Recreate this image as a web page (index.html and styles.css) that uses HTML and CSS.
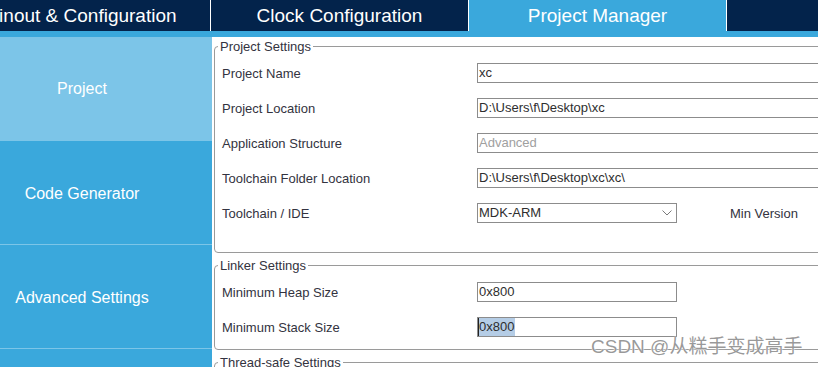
FILE: index.html
```html
<!DOCTYPE html>
<html lang="en">
<head>
<meta charset="utf-8">
<title>Project Manager</title>
<link rel="stylesheet" href="styles.css">
</head>
<body>
<div class="app">
  <nav class="tabs">
    <div class="tab">Pinout &amp; Configuration</div>
    <div class="tab">Clock Configuration</div>
    <div class="tab active">Project Manager</div>
    <div class="tab tab-rest"></div>
  </nav>
  <div class="strip"></div>
  <div class="main">
    <aside class="side">
      <div class="item active">Project</div>
      <div class="item">Code Generator</div>
      <div class="item">Advanced Settings</div>
      <div class="item"></div>
    </aside>
    <section class="content">
      <fieldset class="group group-project">
        <legend>Project Settings</legend>
        <div class="row"><span class="label">Project Name</span><div class="field">xc</div></div>
        <div class="row"><span class="label">Project Location</span><div class="field">D:\Users\f\Desktop\xc</div></div>
        <div class="row"><span class="label">Application Structure</span><div class="field disabled">Advanced</div></div>
        <div class="row"><span class="label">Toolchain Folder Location</span><div class="field">D:\Users\f\Desktop\xc\xc\</div></div>
        <div class="row"><span class="label">Toolchain / IDE</span>
          <div class="field select"><span>MDK-ARM</span>
            <svg class="chev" width="10" height="6" viewBox="0 0 10 6"><polyline points="0.5,0.5 5,5 9.5,0.5" fill="none" stroke="#7a7a7a" stroke-width="1"/></svg>
          </div>
          <span class="minver">Min Version</span>
        </div>
      </fieldset>
      <fieldset class="group group-linker">
        <legend>Linker Settings</legend>
        <div class="row"><span class="label">Minimum Heap Size</span><div class="field short">0x800</div></div>
        <div class="row"><span class="label">Minimum Stack Size</span><div class="field short focus"><span class="selected">0x800</span></div></div>
      </fieldset>
      <fieldset class="group group-thread">
        <legend>Thread-safe Settings</legend>
        <div class="row"></div>
      </fieldset>
    </section>
  </div>
  <div class="watermark">CSDN @从糕手变成高手</div>
</div>
</body>
</html>
```
FILE: styles.css
```css
html, body {
  margin: 0;
  padding: 0;
  background: #ffffff;
  overflow: hidden;
}

.app {
  position: relative;
  width: 818px;
  height: 367px;
  overflow: hidden;
  font-family: "Liberation Sans", Arial, sans-serif;
  background: #ffffff;
}

.tabs {
  display: flex;
  height: 31px;
  overflow: hidden;
  margin-left: -47px;
  background: #03234b;
}

.tab {
  flex: 0 0 257px;
  border-right: 1px solid #ffffff;
  color: #ffffff;
  font-size: 19px;
  line-height: 32px;
  text-align: center;
  white-space: nowrap;
}

.tab.active {
  background: #3aa8dc;
}

.tab-rest {
  flex: 1 0 100px;
  border-right: 0;
}

.strip {
  height: 6px;
  background: #3aa8dc;
}

.main {
  display: flex;
}

.side {
  flex: none;
  width: 212px;
}

.item {
  box-sizing: border-box;
  height: 104px;
  padding: 3px 48px 0 0;
  border-bottom: 1px solid #7cc5e8;
  background: #3aa8dc;
  color: #ffffff;
  font-size: 16px;
  display: flex;
  align-items: center;
  justify-content: center;
  white-space: nowrap;
}

.item.active {
  padding-top: 1px;
  background: #7cc5e8;
}

.content {
  flex: none;
  width: 680px;
  padding-left: 2px;
}

.group {
  margin: 2px 0 0;
  padding: 9px 0 29px 7px;
  border: 1px solid #9a9a9a;
  border-radius: 4px;
  min-width: 0;
}

.group + .group {
  margin-top: 5px;
}

.group-linker {
  padding-bottom: 12px;
}

legend {
  margin-left: -4px;
  padding: 0 2px;
  font-size: 13px;
  line-height: 15px;
  color: #333340;
}

.row {
  display: flex;
  align-items: center;
  height: 20px;
}

.row + .row {
  margin-top: 15px;
}

.label {
  flex: none;
  width: 255px;
  font-size: 13px;
  color: #333340;
  white-space: nowrap;
}

.field {
  flex: none;
  box-sizing: border-box;
  width: 420px;
  height: 20px;
  padding: 0 1px;
  border: 1px solid #8c8c8c;
  font-size: 13px;
  line-height: 18px;
  color: #2e2e2e;
  white-space: nowrap;
  background: #ffffff;
}

.field.disabled {
  color: #a0a0a0;
}

.field.short {
  width: 200px;
}

.field.select {
  width: 200px;
  display: flex;
  align-items: center;
  justify-content: space-between;
  padding-right: 4px;
}

.chev {
  display: block;
}

.minver {
  margin-left: 53px;
  font-size: 13px;
  color: #333340;
  white-space: nowrap;
}

.field.focus {
  padding-left: 0;
}

.selected {
  display: inline-block;
  height: 18px;
  line-height: 18px;
  padding-right: 1px;
  border-left: 1px solid #222222;
  background: #b5cde6;
  vertical-align: top;
}

.watermark {
  position: absolute;
  left: 591px;
  top: 335px;
  font-family: "Liberation Sans", "Noto Sans CJK SC", sans-serif;
  font-size: 19px;
  line-height: 24px;
  color: rgba(120, 120, 120, 0.75);
  text-shadow: 0 0 1px #ffffff, 0 0 2px #ffffff;
  white-space: nowrap;
}
```
